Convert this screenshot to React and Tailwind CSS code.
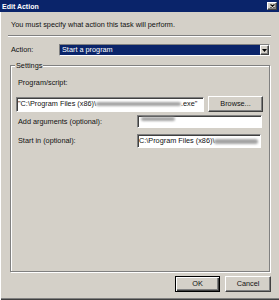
import React from 'react';

const sunken =
  'bg-white border border-t-[#808080] border-l-[#808080] border-b-white border-r-white shadow-[inset_1px_1px_0_#404040]';
const raised =
  'bg-[#d4d0c8] border border-t-white border-l-white border-b-[#404040] border-r-[#404040] shadow-[inset_-1px_-1px_0_#808080]';

function Smudge({ w, className = '' }) {
  return <span className={`inline-block h-[4px] rounded-full bg-[#a4a4a4] blur-[1.2px] ${className}`} style={{ width: w }} />;
}

export default function App() {
  return (
    <div className="w-[279px] h-[300px] bg-[#d4d0c8] flex flex-col font-['Liberation_Sans',Arial,sans-serif] text-[7.3px] text-[#111] shadow-[inset_1px_0_0_#ffffff,inset_0_-1px_0_#404040,inset_0_-2px_0_#808080]">
      {/* Title bar */}
      <div className="h-[12px] bg-[#0a246a] flex items-center justify-between pl-[2px] pr-[2px]">
        <span className="text-white font-bold text-[7px] leading-none">Edit Action</span>
        <span className={`w-[10px] h-[8px] flex items-center justify-center ${raised}`}>
          <svg width="5" height="4" viewBox="0 0 5 4">
            <path d="M0.5 0.5 L4.5 3.5 M4.5 0.5 L0.5 3.5" stroke="#000" strokeWidth="1.1" />
          </svg>
        </span>
      </div>

      {/* Intro */}
      <div className="mt-[8px] h-[9px] leading-[9px] pl-[11px]">
        You must specify what action this task will perform.
      </div>

      {/* Separator */}
      <div className="mt-[6px] mx-[8px] h-[2px] border-t border-t-[#808080] border-b border-b-white" />

      {/* Action row */}
      <div className="mt-[7px] h-[12px] flex items-center">
        <span className="w-[59px] pl-[11px] leading-none">Action:</span>
        <div className={`w-[211px] h-[12px] flex ${sunken} bg-[#0a246a]`}>
          <span className="flex-1 bg-[#0a246a] text-white leading-[10px] pl-[2px]">Start a program</span>
          <span className={`w-[9px] h-full flex items-center justify-center ${raised}`}>
            <svg width="5" height="3" viewBox="0 0 5 3">
              <path d="M0 0 H5 L2.5 3 Z" fill="#000" />
            </svg>
          </span>
        </div>
      </div>

      {/* Settings group */}
      <div className="mt-[9px] ml-[10px] w-[260px] h-[207px] relative border border-[#808080] shadow-[inset_1px_1px_0_#ffffff,1px_1px_0_#ffffff] px-[5px] pt-[12px]">
        <span className="absolute -top-[5px] left-[4px] px-[1px] bg-[#d4d0c8] leading-[9px]">Settings</span>

        <div className="h-[9px] leading-[9px] pl-[2px]">Program/script:</div>

        <div className="mt-[9px] h-[16px] flex items-center gap-[4px]">
          <div className={`w-[188px] h-[15px] flex items-center pl-[1px] whitespace-nowrap overflow-hidden ${sunken}`}>
            <span className="leading-none">"C:\Program Files (x86)\</span>
            <Smudge w="85px" />
            <span className="leading-none">.exe"</span>
          </div>
          <button className={`w-[55px] h-[16px] flex items-center justify-center leading-none ${raised}`}>
            Browse...
          </button>
        </div>

        <div className="mt-[3px] h-[13px] flex items-center">
          <span className="w-[121px] pl-[2px] leading-none">Add arguments (optional):</span>
          <div className={`w-[125px] h-[13px] flex items-start pt-[1px] pl-[3px] ${sunken}`}>
            <Smudge w="34px" className="h-[3px]" />
          </div>
        </div>

        <div className="mt-[6px] h-[14px] flex items-center">
          <span className="w-[121px] pl-[2px] leading-none">Start in (optional):</span>
          <div className={`w-[124px] h-[14px] flex items-center pl-[1px] whitespace-nowrap overflow-hidden ${sunken}`}>
            <span className="leading-none">C:\Program Files (x86)\</span>
            <Smudge w="44px" className="h-[5px]" />
          </div>
        </div>
      </div>

      {/* Buttons */}
      <div className="mt-[4px] pr-[8px] flex justify-end gap-[5px]">
        <button className="w-[45px] h-[16px] flex items-center justify-center leading-none bg-[#d4d0c8] border border-black shadow-[inset_1px_1px_0_#ffffff,inset_-1px_-1px_0_#404040,inset_-2px_-2px_0_#808080]">
          OK
        </button>
        <button className={`w-[46px] h-[16px] flex items-center justify-center leading-none ${raised}`}>
          Cancel
        </button>
      </div>
    </div>
  );
}
